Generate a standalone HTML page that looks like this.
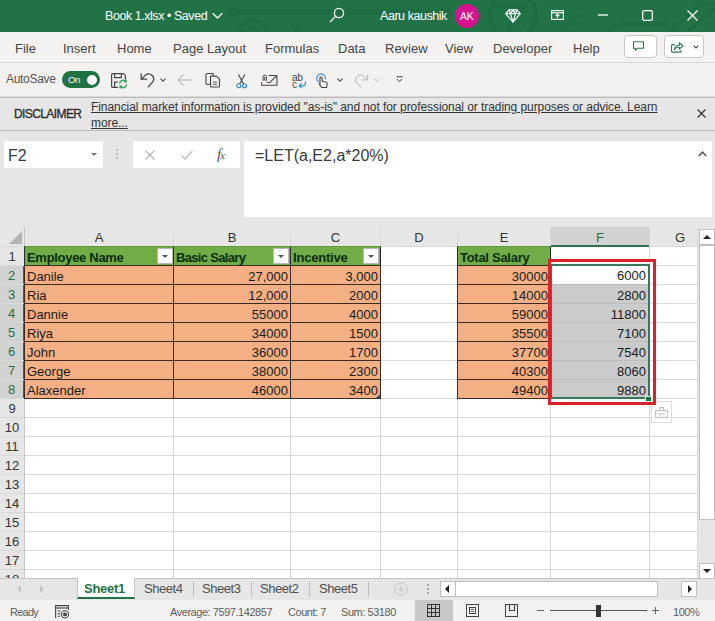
<!DOCTYPE html>
<html>
<head>
<meta charset="utf-8">
<title>Book 1.xlsx</title>
<style>
html,body{margin:0;padding:0;}
body{width:715px;height:621px;position:relative;overflow:hidden;background:#fff;font-family:"Liberation Sans",sans-serif;}
.abs{position:absolute;}
svg{position:absolute;overflow:visible;}
.t{position:absolute;white-space:nowrap;line-height:1;}
#title{left:0;top:0;width:715px;height:32px;background:#217346;overflow:hidden;}
#menu{left:0;top:32px;width:715px;height:30px;background:#f3f2f1;}
#qat{left:0;top:62px;width:715px;height:34px;background:#f3f2f1;border-top:1px solid #d6d6d6;box-sizing:border-box;}
#disc{left:0;top:96px;width:715px;height:35px;background:#e6e6e6;border-top:1px solid #d8d8d8;border-bottom:1px solid #bcbcbc;box-shadow:inset 0 1px 0 #bcbcbc;box-sizing:border-box;}
#fbar{left:0;top:131px;width:715px;height:96px;background:#e6e6e6;}
.menu .t{top:42px;font-size:13px;color:#444;}
.wt{color:#fff;font-size:12.5px;letter-spacing:-0.45px;}
/* grid */
#grid{left:0;top:227px;width:698px;height:351px;background:#fff;overflow:hidden;}
.colh{position:absolute;top:0;height:19px;background:#e6e6e6;font-size:13px;color:#333;text-align:center;line-height:21px;}
.rowh{position:absolute;left:0;width:24px;height:18px;background:#e6e6e6;font-size:13px;color:#333;text-align:center;line-height:20px;}
.vl{position:absolute;width:1px;background:#d9d9d9;}
.hl{position:absolute;height:1px;background:#d9d9d9;}
.cell{position:absolute;height:20px;box-sizing:border-box;font-size:13px;color:#1a1a1a;line-height:21px;white-space:nowrap;overflow:hidden;}
.or{background:#f4b084;border:1px solid #3a2c24;}
.gr{background:#70ad47;border:1px solid #2a2a2a;border-top-color:#649a40;font-weight:bold;color:#0c2a0c;}
.r{text-align:right;padding-right:2px;}
.l{padding-left:2px;}
.sel{background:#cbcbcb;border-top:1px solid #bdbdbd;padding-right:4px;}
.fr{padding-right:4px;}
.fbtn{position:absolute;width:16px;height:16px;background:#fff;border:1px solid #b8b8b8;box-sizing:border-box;}
.fbtn i{position:absolute;left:4px;top:6px;width:0;height:0;border-left:3px solid transparent;border-right:3px solid transparent;border-top:3px solid #555;}
#tabs{left:0;top:578px;width:715px;height:22px;background:#e6e6e6;border-top:1px solid #c4c4c4;box-sizing:border-box;}
#status{left:0;top:600px;width:715px;height:21px;background:#f3f2f1;}
.st{font-size:11px;color:#5e5e5e;top:607px;letter-spacing:-0.45px;}
.tab{font-size:13px;color:#505050;top:582px;letter-spacing:-0.45px;}
.sep{position:absolute;top:582px;width:1px;height:15px;background:#bdbdbd;}
</style>
</head>
<body>
<!-- TITLE BAR -->
<div id="title" class="abs">
<svg width="715" height="32" viewBox="0 0 715 32" fill="none" stroke="#1e6d42" stroke-width="3">
<path d="M237 12 H452" stroke-width="5"/><circle cx="233" cy="12" r="3"/>
<circle cx="253" cy="34" r="14"/><circle cx="253" cy="34" r="6"/>
<circle cx="298" cy="29" r="2.5"/><path d="M298 32 V36"/>
<circle cx="513" cy="15" r="23" stroke-width="4"/><path d="M498 6 H524 L506 30" stroke-width="4"/>
<path d="M603 34 L620 24 H668"/><path d="M668 34 L700 4 H715"/><path d="M686 34 L712 10 H715"/><path d="M560 34 L580 14"/>
</svg>
</div>
<div class="t wt" style="left:105px;top:10px;">Book 1.xlsx • Saved</div>
<svg style="left:212px;top:12px;" width="11" height="8" viewBox="0 0 11 8" fill="none" stroke="#fff" stroke-width="1.3"><path d="M0.7 1.2 L5.5 6 L10.3 1.2"/></svg>
<svg style="left:329px;top:7px;" width="16" height="16" viewBox="0 0 16 16" fill="none" stroke="#fff" stroke-width="1.3"><circle cx="10" cy="6" r="4.6"/><path d="M6.6 9.4 L1 15"/></svg>
<div class="t wt" style="left:380px;top:10px;">Aaru kaushik</div>
<div class="abs" style="left:455px;top:4px;width:24px;height:24px;border-radius:12px;background:#d5128f;"></div>
<div class="t" style="left:460px;top:11px;font-size:10.5px;color:#fff;letter-spacing:-0.3px;">AK</div>
<svg style="left:505px;top:9px;" width="16" height="14" viewBox="0 0 16 15" preserveAspectRatio="none" fill="none" stroke="#fff" stroke-width="1.2" stroke-linejoin="round"><path d="M4 1 H12 L15.3 5 L8 14 L0.7 5 Z"/><path d="M0.7 5 H15.3"/><path d="M5.5 5 L8 14 L10.5 5"/><path d="M4 1 L5.5 5 L8 1 L10.5 5 L12 1"/></svg>
<svg style="left:551px;top:10px;" width="13" height="10" viewBox="0 0 13 10" fill="none" stroke="#fff" stroke-width="1.2"><rect x="0.6" y="0.6" width="11.8" height="8.8"/><path d="M0.6 2.8 H12.4"/><path d="M6.5 8.2 V4.4"/><path d="M4.5 6.2 L6.5 4.2 L8.5 6.2"/></svg>
<svg style="left:598px;top:14px;" width="10" height="2" viewBox="0 0 10 2"><path d="M0 1 H10" stroke="#fff" stroke-width="1.3"/></svg>
<svg style="left:642px;top:10px;" width="11" height="11" viewBox="0 0 11 11" fill="none" stroke="#fff" stroke-width="1.3"><rect x="0.65" y="0.65" width="9.7" height="9.7" rx="1.5"/></svg>
<svg style="left:687px;top:10px;" width="11" height="11" viewBox="0 0 11 11" fill="none" stroke="#fff" stroke-width="1.3"><path d="M0.5 0.5 L10.5 10.5 M10.5 0.5 L0.5 10.5"/></svg>

<!-- MENU -->
<div id="menu" class="abs"></div>
<div class="menu">
<div class="t" style="left:15px;">File</div>
<div class="t" style="left:63px;">Insert</div>
<div class="t" style="left:117px;">Home</div>
<div class="t" style="left:173px;">Page Layout</div>
<div class="t" style="left:265px;">Formulas</div>
<div class="t" style="left:338px;">Data</div>
<div class="t" style="left:385px;">Review</div>
<div class="t" style="left:445px;">View</div>
<div class="t" style="left:493px;">Developer</div>
<div class="t" style="left:573px;">Help</div>
</div>
<div class="abs" style="left:624px;top:35px;width:33px;height:23px;border:1px solid #c8c8c8;border-radius:4px;background:#fff;box-sizing:border-box;"></div>
<svg style="left:632.5px;top:41px;" width="11" height="10.5" viewBox="0 0 12 11" fill="none" stroke="#2c7a52" stroke-width="1.2" stroke-linejoin="round"><path d="M0.6 0.6 H11.4 V7.6 H4.6 L2.6 10 V7.6 H0.6 Z"/></svg>
<div class="abs" style="left:664px;top:35px;width:40px;height:23px;border:1px solid #c8c8c8;border-radius:4px;background:#fff;box-sizing:border-box;"></div>
<svg style="left:671px;top:40.5px;" width="12.5" height="12" viewBox="0 0 13 12" fill="none" stroke="#2c7a52" stroke-width="1.2" stroke-linejoin="round"><path d="M4 3.6 H1.6 A1 1 0 0 0 0.6 4.6 V10.4 A1 1 0 0 0 1.6 11.4 H9.4 A1 1 0 0 0 10.4 10.4 V9"/><path d="M3.6 8.6 C4 5.6 6 4.2 8.6 4.2 V1.6 L12.4 5 L8.6 8.2 V6 C6.4 6 4.8 6.8 3.6 8.6 Z"/></svg>
<svg style="left:693.3px;top:45.2px;" width="6" height="4" viewBox="0 0 7 5" fill="none" stroke="#333" stroke-width="1.3"><path d="M0.6 0.8 L3.5 3.8 L6.4 0.8"/></svg>

<!-- QAT -->
<div id="qat" class="abs"></div>
<div class="t" style="left:6px;top:73px;font-size:12px;color:#555;letter-spacing:-0.3px;">AutoSave</div>
<div class="abs" style="left:62px;top:71px;width:38px;height:17px;border-radius:9px;background:#1f7244;"></div>
<div class="t" style="left:68px;top:75px;font-size:9.5px;color:#fff;letter-spacing:-0.3px;">On</div>
<div class="abs" style="left:87px;top:75px;width:10px;height:10px;border-radius:5px;background:#fff;"></div>
<!-- save -->
<svg style="left:111px;top:73px;" width="17" height="16" viewBox="0 0 17 16" fill="none" stroke="#444" stroke-width="1.2" stroke-linejoin="round"><path d="M7 14.4 H1.6 A1 1 0 0 1 0.6 13.4 V1.6 A1 1 0 0 1 1.6 0.6 H12.4 L14.4 2.6 V6.5"/><path d="M3.6 0.6 V4.6 H10.4 V0.6"/><path d="M3.6 14.4 V9.2 H6.8"/><g stroke="#2e9a52" stroke-width="1.3"><path d="M8.6 10.6 A3.6 3.6 0 0 1 15 8.6"/><path d="M15.2 6.4 V8.8 H12.8"/><path d="M15.6 11.4 A3.6 3.6 0 0 1 9.2 13.4"/><path d="M9 15.6 V13.2 H11.4"/></g></svg>
<!-- undo -->
<svg style="left:140px;top:72.3px;" width="15.5" height="16" viewBox="0 0 16 16" fill="none" stroke="#444" stroke-width="1.3" stroke-linecap="round" stroke-linejoin="round"><path d="M1.2 1.6 V7.2 H6.8"/><path d="M1.6 6.8 L5.6 3 A5.2 5.2 0 0 1 13 10.2 L8.6 15"/></svg>
<svg style="left:160.3px;top:78px;" width="6" height="4.3" viewBox="0 0 7 5" fill="none" stroke="#444" stroke-width="1.2"><path d="M0.6 0.8 L3.5 3.8 L6.4 0.8"/></svg>
<!-- back arrow (disabled) -->
<svg style="left:177px;top:74px;" width="15" height="12" viewBox="0 0 15 12" fill="none" stroke="#c2c2c2" stroke-width="1.3" stroke-linecap="round" stroke-linejoin="round"><path d="M14 6 H1.2"/><path d="M6 1 L1 6 L6 11"/></svg>
<!-- copy -->
<svg style="left:204.6px;top:73.3px;" width="16.4" height="14.6" viewBox="0 0 17 16" fill="none" stroke="#444" stroke-width="1.2" stroke-linejoin="round"><path d="M5.4 12.4 H1.6 A1 1 0 0 1 0.6 11.4 V1.6 A1 1 0 0 1 1.6 0.6 H8.4 V3"/><path d="M5.6 3.4 H12 L15.4 6.8 V14.4 A1 1 0 0 1 14.4 15.4 H6.6 A1 1 0 0 1 5.6 14.4 Z"/><path d="M8.4 10 H12.6 M8.4 12.4 H12.6" stroke-width="1"/></svg>
<!-- scissors -->
<svg style="left:236px;top:73.5px;" width="11.3" height="15" viewBox="0 0 13 17" fill="none" stroke-width="1.3" stroke-linecap="round"><path d="M3 0.8 L8.6 11.2 M10 0.8 L4.4 11.2" stroke="#444"/><circle cx="3.2" cy="13.4" r="2.3" stroke="#2b88d8"/><circle cx="9.8" cy="13.4" r="2.3" stroke="#2b88d8"/></svg>
<!-- mail w/ attachment -->
<svg style="left:261px;top:73.6px;" width="16.6" height="11.8" viewBox="0 0 18 13" fill="none" stroke="#444" stroke-width="1.2" stroke-linejoin="round"><path d="M8 1.6 H17.4 V12.4 H0.6 V9"/><path d="M6 9 L9.4 9.4 L17.2 1.8"/><path d="M2.2 7.6 V3 A1.8 1.8 0 0 1 5.8 3 V6.6 A1 1 0 0 1 3.9 6.6 V3.2" stroke-width="1.1"/></svg>
<!-- spelling -->
<div class="t" style="left:292px;top:72.5px;font-size:10px;color:#444;letter-spacing:-0.3px;">ab</div>
<div class="t" style="left:292px;top:80px;font-size:10px;color:#444;">c</div>
<svg style="left:297.5px;top:80.5px;" width="8.5" height="8" viewBox="0 0 9 9" fill="none" stroke="#2b88d8" stroke-width="1.3" stroke-linecap="round" stroke-linejoin="round"><path d="M8 1 V3.4 A2 2 0 0 1 6 5.4 H1.4"/><path d="M3.6 3 L1.2 5.4 L3.6 7.8"/></svg>
<!-- touch -->
<svg style="left:315.6px;top:73.2px;" width="12.6" height="15.6" viewBox="0 0 14 17" fill="none" stroke-width="1.2" stroke-linecap="round" stroke-linejoin="round"><path d="M2.6 9.4 A4.8 4.8 0 1 1 10.4 6.4" stroke="#2b88d8"/><path d="M4.4 13 V5.4 A1.2 1.2 0 0 1 6.8 5.4 V9 L11 9.8 A1.6 1.6 0 0 1 12.4 11.6 L11.8 16 H6.4 L3.6 12.2 Z" stroke="#444" fill="#f3f2f1"/></svg>
<svg style="left:336.5px;top:78px;" width="6" height="4.3" viewBox="0 0 7 5" fill="none" stroke="#444" stroke-width="1.2"><path d="M0.6 0.8 L3.5 3.8 L6.4 0.8"/></svg>
<!-- redo disabled -->
<svg style="left:353.6px;top:72.6px;" width="14.6" height="15.4" viewBox="0 0 16 16" fill="none" stroke="#c2c2c2" stroke-width="1.3" stroke-linecap="round" stroke-linejoin="round"><path d="M14.8 1.6 V7.2 H9.2"/><path d="M14.4 6.8 L10.4 3 A5.2 5.2 0 0 0 3 10.2 L7.4 15"/></svg>
<svg style="left:374px;top:78px;" width="6" height="4.3" viewBox="0 0 7 5" fill="none" stroke="#c8c8c8" stroke-width="1.2"><path d="M0.6 0.8 L3.5 3.8 L6.4 0.8"/></svg>
<!-- customize -->
<svg style="left:395.6px;top:76.3px;" width="7" height="6.8" viewBox="0 0 9 9" fill="none" stroke="#444" stroke-width="1.3"><path d="M0.4 1 H8.6"/><path d="M1 4 L4.5 7.6 L8 4"/></svg>

<!-- DISCLAIMER -->
<div id="disc" class="abs"></div>
<div class="t" style="left:14px;top:108px;font-size:12px;color:#2b2b2b;letter-spacing:-0.6px;-webkit-text-stroke:0.3px #2b2b2b;">DISCLAIMER</div>
<div class="t" style="left:91px;top:101px;font-size:12px;color:#333;text-decoration:underline;letter-spacing:-0.07px;">Financial market information is provided "as-is" and not for professional or trading purposes or advice. Learn</div>
<div class="t" style="left:91px;top:116.5px;font-size:12px;color:#333;text-decoration:underline;letter-spacing:-0.07px;">more...</div>
<svg style="left:697px;top:109.3px;" width="9" height="9" viewBox="0 0 9 9" fill="none" stroke="#333" stroke-width="1.2"><path d="M0.5 0.5 L8.5 8.5 M8.5 0.5 L0.5 8.5"/></svg>

<!-- FORMULA BAR -->
<div id="fbar" class="abs"></div>
<div class="abs" style="left:4px;top:141px;width:99px;height:27px;background:#fff;"></div>
<div class="t" style="left:8px;top:148px;font-size:16px;color:#3a3a3a;">F2</div>
<div class="abs" style="left:91px;top:153px;width:0;height:0;border-left:3px solid transparent;border-right:3px solid transparent;border-top:3px solid #777;"></div>
<div class="abs" style="left:116px;top:149px;width:2px;height:2px;background:#bbb;box-shadow:0 4px 0 #bbb,0 8px 0 #bbb;"></div>
<div class="abs" style="left:133px;top:141px;width:107px;height:27px;background:#fff;"></div>
<svg style="left:145px;top:150px;" width="10" height="10" viewBox="0 0 10 10" fill="none" stroke="#b4b4b4" stroke-width="1.2"><path d="M0.5 0.5 L9.5 9.5 M9.5 0.5 L0.5 9.5"/></svg>
<svg style="left:181px;top:150px;" width="12" height="10" viewBox="0 0 12 10" fill="none" stroke="#b4b4b4" stroke-width="1.2"><path d="M0.6 5.4 L4 9 L11.4 0.8"/></svg>
<div class="t" style="left:217px;top:147px;font-size:15px;color:#555;font-family:'Liberation Serif',serif;font-style:italic;letter-spacing:-1px;">f<span style="font-size:11px;">x</span></div>
<div class="abs" style="left:244px;top:141px;width:468px;height:76px;background:#fff;"></div>
<div class="t" style="left:255px;top:148px;font-size:16px;color:#3a3a3a;">=LET(a,E2,a*20%)</div>
<svg style="left:698px;top:151px;" width="9" height="6" viewBox="0 0 9 6" fill="none" stroke="#555" stroke-width="1.5"><path d="M0.8 5 L4.5 1.2 L8.2 5"/></svg>

<!-- GRID -->
<div id="grid" class="abs">
<div class="vl" style="left:173px;top:0;height:351px;"></div>
<div class="vl" style="left:290px;top:0;height:351px;"></div>
<div class="vl" style="left:380px;top:0;height:351px;"></div>
<div class="vl" style="left:457px;top:0;height:351px;"></div>
<div class="vl" style="left:550px;top:0;height:351px;"></div>
<div class="vl" style="left:649px;top:0;height:351px;"></div>
<div class="vl" style="left:697px;top:0;height:351px;"></div>
<div class="hl" style="left:0;top:19px;width:698px;"></div>
<div class="hl" style="left:0;top:38px;width:698px;"></div>
<div class="hl" style="left:0;top:57px;width:698px;"></div>
<div class="hl" style="left:0;top:76px;width:698px;"></div>
<div class="hl" style="left:0;top:95px;width:698px;"></div>
<div class="hl" style="left:0;top:114px;width:698px;"></div>
<div class="hl" style="left:0;top:133px;width:698px;"></div>
<div class="hl" style="left:0;top:152px;width:698px;"></div>
<div class="hl" style="left:0;top:171px;width:698px;"></div>
<div class="hl" style="left:0;top:190px;width:698px;"></div>
<div class="hl" style="left:0;top:209px;width:698px;"></div>
<div class="hl" style="left:0;top:228px;width:698px;"></div>
<div class="hl" style="left:0;top:247px;width:698px;"></div>
<div class="hl" style="left:0;top:266px;width:698px;"></div>
<div class="hl" style="left:0;top:285px;width:698px;"></div>
<div class="hl" style="left:0;top:304px;width:698px;"></div>
<div class="hl" style="left:0;top:323px;width:698px;"></div>
<div class="hl" style="left:0;top:342px;width:698px;"></div>
<div class="hl" style="left:0;top:361px;width:698px;"></div>
<div class="colh" style="left:0;width:24px;"></div>
<div class="vl" style="left:24px;top:0;height:351px;background:#c6c6c6;"></div>
<div class="colh" style="left:25px;width:148px;">A</div>
<div class="colh" style="left:174px;width:116px;">B</div>
<div class="colh" style="left:291px;width:89px;">C</div>
<div class="colh" style="left:381px;width:76px;">D</div>
<div class="colh" style="left:458px;width:92px;">E</div>
<div class="colh" style="left:551px;width:98px;background:#d2d2d2;color:#1f7244;border-bottom:2px solid #2d7350;height:18px;">F</div>
<div class="colh" style="left:650px;width:47px;text-align:left;text-indent:25px;">G</div>
<div class="rowh" style="top:20px;">1</div>
<div class="rowh" style="top:39px;background:#d2d2d2;color:#1f7244;border-right:1px solid #1f7244;width:23px;">2</div>
<div class="rowh" style="top:58px;background:#d2d2d2;color:#1f7244;border-right:1px solid #1f7244;width:23px;">3</div>
<div class="rowh" style="top:77px;background:#d2d2d2;color:#1f7244;border-right:1px solid #1f7244;width:23px;">4</div>
<div class="rowh" style="top:96px;background:#d2d2d2;color:#1f7244;border-right:1px solid #1f7244;width:23px;">5</div>
<div class="rowh" style="top:115px;background:#d2d2d2;color:#1f7244;border-right:1px solid #1f7244;width:23px;">6</div>
<div class="rowh" style="top:134px;background:#d2d2d2;color:#1f7244;border-right:1px solid #1f7244;width:23px;">7</div>
<div class="rowh" style="top:153px;background:#d2d2d2;color:#1f7244;border-right:1px solid #1f7244;width:23px;">8</div>
<div class="rowh" style="top:172px;">9</div>
<div class="rowh" style="top:191px;">10</div>
<div class="rowh" style="top:210px;">11</div>
<div class="rowh" style="top:229px;">12</div>
<div class="rowh" style="top:248px;">13</div>
<div class="rowh" style="top:267px;">14</div>
<div class="rowh" style="top:286px;">15</div>
<div class="rowh" style="top:305px;">16</div>
<div class="rowh" style="top:324px;">17</div>
<div class="rowh" style="top:343px;">18</div>
<div class="cell gr l" style="left:24px;top:19px;width:150px;letter-spacing:-0.3px;">Employee Name</div>
<div class="cell gr l" style="left:173px;top:19px;width:118px;letter-spacing:-0.67px;">Basic Salary</div>
<div class="cell gr l" style="left:290px;top:19px;width:91px;letter-spacing:-0.2px;">Incentive</div>
<div class="cell gr l" style="left:457px;top:19px;width:94px;letter-spacing:-0.28px;">Total Salary</div>
<div class="cell or l" style="left:24px;top:38px;width:150px;">Danile</div>
<div class="cell or r" style="left:173px;top:38px;width:118px;">27,000</div>
<div class="cell or r" style="left:290px;top:38px;width:91px;">3,000</div>
<div class="cell or r" style="left:457px;top:38px;width:94px;">30000</div>
<div class="cell fr r" style="left:550px;top:38px;width:100px;">6000</div>
<div class="cell or l" style="left:24px;top:57px;width:150px;">Ria</div>
<div class="cell or r" style="left:173px;top:57px;width:118px;">12,000</div>
<div class="cell or r" style="left:290px;top:57px;width:91px;">2000</div>
<div class="cell or r" style="left:457px;top:57px;width:94px;">14000</div>
<div class="cell sel r" style="left:550px;top:57px;width:100px;">2800</div>
<div class="cell or l" style="left:24px;top:76px;width:150px;">Dannie</div>
<div class="cell or r" style="left:173px;top:76px;width:118px;">55000</div>
<div class="cell or r" style="left:290px;top:76px;width:91px;">4000</div>
<div class="cell or r" style="left:457px;top:76px;width:94px;">59000</div>
<div class="cell sel r" style="left:550px;top:76px;width:100px;">11800</div>
<div class="cell or l" style="left:24px;top:95px;width:150px;">Riya</div>
<div class="cell or r" style="left:173px;top:95px;width:118px;">34000</div>
<div class="cell or r" style="left:290px;top:95px;width:91px;">1500</div>
<div class="cell or r" style="left:457px;top:95px;width:94px;">35500</div>
<div class="cell sel r" style="left:550px;top:95px;width:100px;">7100</div>
<div class="cell or l" style="left:24px;top:114px;width:150px;">John</div>
<div class="cell or r" style="left:173px;top:114px;width:118px;">36000</div>
<div class="cell or r" style="left:290px;top:114px;width:91px;">1700</div>
<div class="cell or r" style="left:457px;top:114px;width:94px;">37700</div>
<div class="cell sel r" style="left:550px;top:114px;width:100px;">7540</div>
<div class="cell or l" style="left:24px;top:133px;width:150px;">George</div>
<div class="cell or r" style="left:173px;top:133px;width:118px;">38000</div>
<div class="cell or r" style="left:290px;top:133px;width:91px;">2300</div>
<div class="cell or r" style="left:457px;top:133px;width:94px;">40300</div>
<div class="cell sel r" style="left:550px;top:133px;width:100px;">8060</div>
<div class="cell or l" style="left:24px;top:152px;width:150px;">Alaxender</div>
<div class="cell or r" style="left:173px;top:152px;width:118px;">46000</div>
<div class="cell or r" style="left:290px;top:152px;width:91px;">3400</div>
<div class="cell or r" style="left:457px;top:152px;width:94px;">49400</div>
<div class="cell sel r" style="left:550px;top:152px;width:100px;">9880</div>
<div class="fbtn" style="left:157px;top:21px;"><i></i></div>
<div class="fbtn" style="left:273px;top:21px;"><i></i></div>
<div class="fbtn" style="left:363px;top:21px;"><i></i></div>
</div>
<!-- select-all triangle -->
<div class="abs" style="left:9px;top:231px;width:0;height:0;border-left:13px solid transparent;border-bottom:13px solid #b4b4b4;"></div>
<!-- table corner mark -->
<div class="abs" style="left:376px;top:394px;width:0;height:0;border-left:4px solid transparent;border-bottom:4px solid #2b4c9a;"></div>
<!-- quick analysis button -->
<div class="abs" style="left:651px;top:401px;width:21px;height:22px;background:#fff;border:1px solid #dcdcdc;box-sizing:border-box;"></div>
<svg style="left:655px;top:406px;" width="13" height="12" viewBox="0 0 13 12" fill="none" stroke="#c4c4c4" stroke-width="1.1"><rect x="0.6" y="4.6" width="11.8" height="6.8"/><path d="M3 8 H10"/><path d="M5 4.6 V1.6 H8.6 V4.6" stroke="#d8b8a8"/></svg>

<!-- selection border / red box / handle -->
<div class="abs" style="left:550px;top:264px;width:100px;height:135px;border:2px solid #35785a;box-sizing:border-box;"></div>
<div class="abs" style="left:548px;top:258.5px;width:108.4px;height:146.4px;border:3px solid #d8232a;box-sizing:border-box;"></div>
<div class="abs" style="left:645px;top:395.5px;width:4.5px;height:4.5px;background:#1f7244;border:1px solid #e8e8e8;box-sizing:content-box;"></div>
<!-- vertical scrollbar -->
<div class="abs" style="left:698px;top:227px;width:17px;height:351px;background:#e6e6e6;"></div>
<div class="abs" style="left:699px;top:229px;width:16px;height:16px;background:#fff;border:1px solid #c0c0c0;box-sizing:border-box;"></div>
<div class="abs" style="left:703px;top:235px;width:0;height:0;border-left:4px solid transparent;border-right:4px solid transparent;border-bottom:4px solid #222;"></div>
<div class="abs" style="left:699px;top:245px;width:16px;height:275px;background:#fff;border:1px solid #c0c0c0;box-sizing:border-box;"></div>
<div class="abs" style="left:699px;top:563px;width:16px;height:16px;background:#fff;border:1px solid #c0c0c0;box-sizing:border-box;"></div>
<div class="abs" style="left:703px;top:569px;width:0;height:0;border-left:4px solid transparent;border-right:4px solid transparent;border-top:4px solid #222;"></div>

<!-- TABS -->
<div id="tabs" class="abs"></div>
<div class="abs" style="left:17px;top:585px;width:0;height:0;border-top:4px solid transparent;border-bottom:4px solid transparent;border-right:4px solid #c6c6c6;"></div>
<div class="abs" style="left:40px;top:585px;width:0;height:0;border-top:4px solid transparent;border-bottom:4px solid transparent;border-left:4px solid #c6c6c6;"></div>
<div class="abs" style="left:77px;top:578px;width:58px;height:21px;background:#fff;border-bottom:2px solid #1f7244;box-sizing:border-box;border-left:1px solid #c4c4c4;border-right:1px solid #c4c4c4;"></div>
<div class="t tab" style="left:84px;font-weight:bold;color:#1f7244;letter-spacing:-0.27px;">Sheet1</div>
<div class="t tab" style="left:144px;">Sheet4</div>
<div class="sep" style="left:193px;"></div>
<div class="t tab" style="left:202px;">Sheet3</div>
<div class="sep" style="left:251px;"></div>
<div class="t tab" style="left:260px;">Sheet2</div>
<div class="sep" style="left:309px;"></div>
<div class="t tab" style="left:319px;">Sheet5</div>
<div class="sep" style="left:368px;"></div>
<svg style="left:394px;top:582px;" width="14" height="14" viewBox="0 0 14 14" fill="none" stroke="#c4c4c4" stroke-width="1"><circle cx="7" cy="7" r="6.3"/><path d="M7 3.6 V10.4 M3.6 7 H10.4"/></svg>
<div class="abs" style="left:427px;top:584px;width:2px;height:2px;background:#aaa;box-shadow:0 4px 0 #aaa,0 8px 0 #aaa;"></div>
<!-- h scrollbar -->
<div class="abs" style="left:440px;top:581px;width:16px;height:16px;background:#fff;border:1px solid #c0c0c0;box-sizing:border-box;"></div>
<div class="abs" style="left:445px;top:585px;width:0;height:0;border-top:4px solid transparent;border-bottom:4px solid transparent;border-right:4px solid #222;"></div>
<div class="abs" style="left:455px;top:581px;width:203px;height:16px;background:#fff;border:1px solid #c0c0c0;box-sizing:border-box;"></div>
<div class="abs" style="left:681px;top:581px;width:16px;height:16px;background:#fff;border:1px solid #c0c0c0;box-sizing:border-box;"></div>
<div class="abs" style="left:688px;top:585px;width:0;height:0;border-top:4px solid transparent;border-bottom:4px solid transparent;border-left:4px solid #222;"></div>

<!-- STATUS -->
<div id="status" class="abs"></div>
<div class="t st" style="left:10px;letter-spacing:-0.75px;">Ready</div>
<svg style="left:55px;top:605px;" width="15" height="14" viewBox="0 0 15 14" fill="none" stroke="#444" stroke-width="1.1"><path d="M0.6 13 V0.6 H13.4 V5"/><path d="M0.6 3 H13.4"/><path d="M2.6 6 H5.6 M2.6 8.6 H5 M2.6 11.2 H5"/><circle cx="10" cy="9.4" r="3.6"/><circle cx="10" cy="9.4" r="1.4" fill="#444"/></svg>
<div class="t st" style="left:170px;">Average: 7597.142857</div>
<div class="t st" style="left:288px;">Count: 7</div>
<div class="t st" style="left:341px;">Sum: 53180</div>
<div class="abs" style="left:415px;top:600px;width:38px;height:21px;background:#c8c8c8;"></div>
<svg style="left:427px;top:604px;" width="13" height="13" viewBox="0 0 13 13" fill="none" stroke="#333" stroke-width="1"><rect x="0.5" y="0.5" width="12" height="12"/><path d="M4.5 0.5 V12.5 M8.5 0.5 V12.5 M0.5 4.5 H12.5 M0.5 8.5 H12.5"/></svg>
<svg style="left:466px;top:604px;" width="13" height="13" viewBox="0 0 13 13" fill="none" stroke="#444" stroke-width="1"><rect x="0.5" y="0.5" width="12" height="12"/><rect x="3.5" y="3.5" width="6" height="6"/><path d="M5 5.5 H8 M5 7.5 H8" stroke-width="0.8"/></svg>
<svg style="left:505px;top:604px;" width="13" height="13" viewBox="0 0 13 13" fill="none" stroke="#444" stroke-width="1"><rect x="0.5" y="0.5" width="12" height="12"/><path d="M4.5 0.5 V6.5 H9.5 V0.5" stroke-width="1.2"/></svg>
<div class="abs" style="left:537px;top:610px;width:7px;height:1px;background:#666;"></div>
<div class="abs" style="left:550px;top:610px;width:97px;height:1px;background:#555;"></div>
<div class="abs" style="left:596px;top:605px;width:5px;height:12px;background:#333;"></div>
<div class="abs" style="left:652px;top:610px;width:7px;height:1px;background:#666;"></div>
<div class="abs" style="left:655px;top:607px;width:1px;height:7px;background:#666;"></div>
<div class="t st" style="left:673px;">100%</div>
</body>
</html>
